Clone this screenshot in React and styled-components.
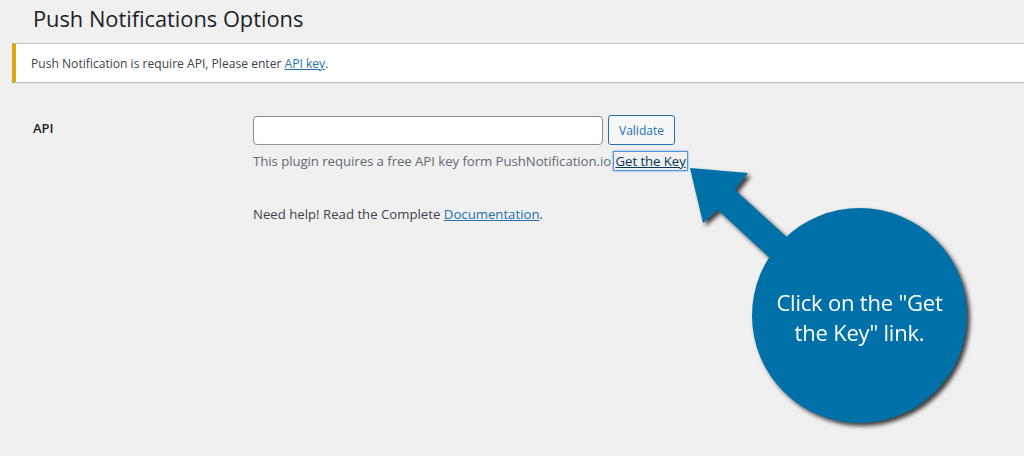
import React from "react";
import styled, { createGlobalStyle } from "styled-components";

const GlobalStyle = createGlobalStyle`
  html, body {
    margin: 0;
    padding: 0;
    background: #f0f0f1;
  }
  body {
    font-family: "Open Sans", "Noto Sans", "Liberation Sans", sans-serif;
    color: #3c434a;
    font-size: 13px;
  }
`;

const Page = styled.div`
  position: relative;
  width: 1024px;
  height: 456px;
  overflow: hidden;
  padding-left: 12px;
  box-sizing: border-box;
`;

const Title = styled.h1`
  margin: 4px 0 0 21px;
  font-size: 21.8px;
  font-weight: 400;
  line-height: 29px;
  color: #1d2327;
`;

const Notice = styled.div`
  margin-top: 10px;
  height: 40px;
  box-sizing: border-box;
  background: #fff;
  border: 1px solid #c3c4c7;
  border-left: 4px solid #dba617;
  border-right: none;
  box-shadow: 0 1px 1px rgba(0, 0, 0, 0.04);
  display: flex;
  align-items: center;
  padding-left: 15px;
  padding-top: 1px;
  font-size: 12.1px;
  color: #3c434a;
`;

const Link = styled.a`
  color: ${(p) => (p.dark ? "#043959" : "#2271b1")};
  text-decoration: underline;
  cursor: pointer;
  ${(p) =>
    p.focused &&
    `
    box-shadow: 0 0 0 1px #4f94d4, 0 0 2px 1px rgba(79,148,212,.8);
    padding: 0 1px;
  `}
`;

const FormRow = styled.div`
  display: grid;
  grid-template-columns: 220px 1fr;
  margin: 32px 0 0 21px;
`;

const Label = styled.div`
  font-size: 13px;
  font-weight: 600;
  color: #1d2327;
  padding-top: 4px;
`;

const Field = styled.div`
  display: flex;
  flex-direction: column;
`;

const InputRow = styled.div`
  display: flex;
  align-items: center;
  gap: 5px;
`;

const Input = styled.input`
  width: 350px;
  height: 29px;
  box-sizing: border-box;
  border: 1px solid #8c8f94;
  border-radius: 4px;
  background: #fff;
  padding: 0 8px;
`;

const Button = styled.button`
  height: 30px;
  box-sizing: border-box;
  padding: 0 10px;
  border: 1px solid #2271b1;
  border-radius: 3px;
  background: #f6f7f7;
  color: #2271b1;
  font-family: inherit;
  font-size: 12px;
`;

const Description = styled.p`
  margin: 6px 0 0;
  font-size: 13.2px;
  color: #646970;
  line-height: 20px;
  letter-spacing: -0.05px;
`;

const Help = styled.p`
  margin: 34px 0 0;
  font-size: 13.2px;
  color: #3c434a;
`;

const Callout = styled.div`
  position: absolute;
  left: 680px;
  top: 160px;
  width: 300px;
  height: 280px;
  filter: drop-shadow(3px 3px 2px rgba(0, 0, 0, 0.75));
`;

const Arrow = styled.svg`
  position: absolute;
  left: 0;
  top: 0;
`;

const Bubble = styled.div`
  position: absolute;
  left: 72px;
  top: 48px;
  width: 215px;
  height: 215px;
  border-radius: 50%;
  background: #0071a8;
  display: flex;
  align-items: center;
  justify-content: center;
  text-align: center;
  color: #fff;
  font-family: "Open Sans", "Noto Sans", sans-serif;
  font-size: 22px;
  line-height: 30px;
  padding-top: 2px;
  box-sizing: border-box;
  letter-spacing: -0.2px;
`;

export default function App() {
  return (
    <>
      <GlobalStyle />
      <Page>
        <Title>Push Notifications Options</Title>
        <Notice>
          <span>
            Push Notification is require API, Please enter <Link>API key</Link>.
          </span>
        </Notice>
        <FormRow>
          <Label>API</Label>
          <Field>
            <InputRow>
              <Input type="text" />
              <Button>Validate</Button>
            </InputRow>
            <Description>
              This plugin requires a free API key form PushNotification.io{" "}
              <Link dark focused>
                Get the Key
              </Link>
            </Description>
            <Help>
              Need help! Read the Complete <Link>Documentation</Link>.
            </Help>
          </Field>
        </FormRow>
        <Callout>
          <Arrow width="300" height="280" viewBox="0 0 300 280">
            <polygon
              points="10,8 68,13 55,30 110,80 92,100 38,50 23,63"
              fill="#0071a8"
            />
          </Arrow>
          <Bubble>
            Click on the "Get
            <br />
            the Key" link.
          </Bubble>
        </Callout>
      </Page>
    </>
  );
}
